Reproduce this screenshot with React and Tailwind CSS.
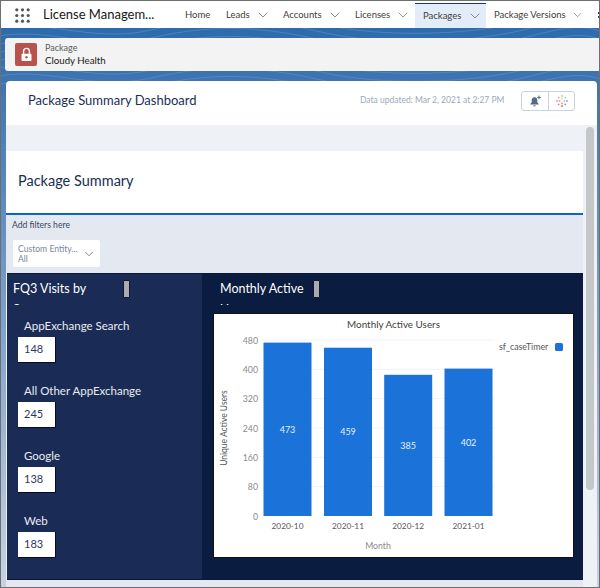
import React from "react";
import { ChevronDown } from "lucide-react";

const navItems = [
  { label: "Home", w: "w-[41px]" },
  { label: "Leads", w: "w-[57px]", menu: true },
  { label: "Accounts", w: "w-[72px]", menu: true },
  { label: "Licenses", w: "w-[60px]", menu: true },
];

const visits = [
  { label: "AppExchange Search", value: 148 },
  { label: "All Other AppExchange", value: 245 },
  { label: "Google", value: 138 },
  { label: "Web", value: 183 },
];

const bars = [
  { x: 263.5, top: 342.6, value: 473, month: "2020-10" },
  { x: 324, top: 347.7, value: 459, month: "2020-11" },
  { x: 384.2, top: 374.8, value: 385, month: "2020-12" },
  { x: 444.5, top: 368.6, value: 402, month: "2021-01" },
];

const ticks = [
  { v: 480, y: 340 },
  { v: 400, y: 369.3 },
  { v: 320, y: 398.7 },
  { v: 240, y: 428 },
  { v: 160, y: 457.3 },
  { v: 80, y: 486.7 },
  { v: 0, y: 516 },
];

function AppDots() {
  return (
    <svg width="15" height="15" viewBox="0 0 15 15" className="text-[#54565a]">
      {[1.8, 7.5, 13.2].map((y) =>
        [1.8, 7.5, 13.2].map((x) => <circle key={`${x}-${y}`} cx={x} cy={y} r="1.6" fill="currentColor" />)
      )}
    </svg>
  );
}

function LockTile() {
  return (
    <div className="flex h-[23px] w-[22px] items-center justify-center rounded-[2px] bg-[#b8524f]">
      <svg width="13" height="15" viewBox="0 0 13 15" fill="none">
        <path d="M3.6 7V4.3a2.9 2.9 0 0 1 5.8 0V7" stroke="#fff" strokeWidth="1.4" />
        <rect x="1.5" y="6.8" width="10" height="7.2" rx="1" fill="#fff" />
        <circle cx="6.5" cy="10.3" r="1.2" fill="#b8524f" />
      </svg>
    </div>
  );
}

function BellIcon() {
  return (
    <svg width="13" height="12" viewBox="0 0 13 12" fill="#54698d">
      <path d="M5.500 2.300c-1.900 0-2.800 1.400-2.800 3v2L1.300 9v.6h8.400V9L8.300 7.300v-2c0-1.700-.9-3-2.800-3z" />
      <path d="M4.300 10.200h2.400a1.200 1.200 0 0 1-2.400 0z" />
      <path d="M10 .6v3.600M8.200 2.400h3.600" stroke="#54698d" strokeWidth="1" />
    </svg>
  );
}

function SparkIcon() {
  const dots = [
    [6, 1, "#e9b27a"],
    [6, 11, "#d9606a"],
    [1, 6, "#e09aa8"],
    [11, 6, "#8fa9d4"],
    [2.6, 2.6, "#e8a08e"],
    [9.4, 2.6, "#9cc7b2"],
    [2.6, 9.4, "#cf82ab"],
    [9.4, 9.4, "#7f9bcf"],
    [6, 3.6, "#ecc394"],
    [6, 8.4, "#dd8f94"],
    [3.6, 6, "#e3a0b2"],
    [8.4, 6, "#a9c0e0"],
  ];
  return (
    <svg width="12" height="12" viewBox="0 0 12 12">
      {dots.map(([x, y, c]) => (
        <circle key={`${x}-${y}`} cx={x} cy={y} r="0.9" fill={c} />
      ))}
    </svg>
  );
}

function TopoBackground() {
  const lines = [];
  for (let i = 0; i < 9; i++) {
    const y = 22 + i * 8;
    lines.push(
      <path
        key={i}
        d={`M-10 ${y} C 40 ${y - 14}, 90 ${y + 14}, 150 ${y} S 260 ${y - 12}, 320 ${y + 2} S 470 ${y + 14}, 530 ${y - 2} S 590 ${y - 8}, 620 ${y}`}
        stroke="#6c97c6"
        strokeWidth="0.5"
        fill="none"
      />
    );
  }
  return (
    <svg width="600" height="100" viewBox="0 0 600 100" className="absolute left-0 top-0">
      {lines}
    </svg>
  );
}

function NavItem({ label, w, menu }) {
  return (
    <div className={`flex shrink-0 items-center whitespace-nowrap ${w}`}>
      <span>{label}</span>
      {menu && <ChevronDown size={16} strokeWidth={1} className="ml-[5px] text-[#54565a]" />}
    </div>
  );
}

function VisitsPanel() {
  return (
    <div className="w-[195px] shrink-0 bg-[#1a2c55]">
      <div className="flex h-[31px] overflow-hidden pl-[6px] pt-[4px] text-white">
        <div className="w-[110px] shrink-0 text-[12.5px] leading-[21px]">FQ3 Visits by Source</div>
        <div className="mt-[2px] h-[18px] w-[7px] rounded-[1px] border border-[#11182c] bg-[#a9abb0]" />
      </div>
      <div className="flex flex-col gap-[20px] pl-[11px] pt-[13px]">
        {visits.map((v) => (
          <div key={v.label}>
            <div className="h-[19px] whitespace-nowrap pl-[6px] text-[11.5px] leading-[16px] text-[#e8ebf2]">{v.label}</div>
            <div className="flex h-[26px] w-[38px] items-center border-b border-r border-[#050d24] bg-white pl-[6px] text-[11px] text-[#2b3a5e]">
              {v.value}
            </div>
          </div>
        ))}
      </div>
    </div>
  );
}

function UsersChart() {
  return (
    <svg width="359" height="243" viewBox="214 314 359 243" className="block bg-white" style={{ fontFamily: "Lato, sans-serif" }}>
      <text x="393.500" y="328" textAnchor="middle" fontSize="9.900" fill="#3e3e3c">Monthly Active Users</text>
      {ticks.map((t) => (
        <g key={t.v}>
          {t.v > 0 && <line x1="263" x2="495" y1={t.y} y2={t.y} stroke="#eef2f8" strokeWidth="1" />}
          <text x="258" y={t.y + 3.500} textAnchor="end" fontSize="8.800" fill="#8b8b8b">{t.v}</text>
        </g>
      ))}
      {bars.map((b) => (
        <g key={b.month}>
          <rect x={b.x} y={b.top} width="48" height={516 - b.top} fill="#1b72d8" />
          <text x={b.x + 24} y={(b.top + 516) / 2 + 3.200} textAnchor="middle" fontSize="9" fill="#e6f0fc">{b.value}</text>
          <text x={b.x + 24} y="529" textAnchor="middle" fontSize="8.300" fill="#54565a">{b.month}</text>
        </g>
      ))}
      <text x="378" y="549" textAnchor="middle" fontSize="8.700" fill="#8b8b8b">Month</text>
      <text transform="translate(227 428) rotate(-90)" textAnchor="middle" fontSize="8.500" fill="#54565a">Unique Active Users</text>
      <text x="499" y="350" fontSize="8.800" fill="#54565a">sf_caseTimer</text>
      <rect x="555" y="343" width="8" height="8" rx="1.500" fill="#1b72d8" />
    </svg>
  );
}

export default function App() {
  return (
    <div
      className="relative h-[588px] w-[600px] overflow-hidden border-x border-b border-[#6d6e70] bg-linear-to-b from-[#2366a9] to-[#c8d2e4] text-[#181818]"
      style={{ fontFamily: "Lato, sans-serif" }}
    >
      <TopoBackground />
      <div className="relative flex h-[28px] items-center border-t border-[#6d6e70] bg-white pt-[1px] text-[9.5px] text-[#3e3e3c]">
        <div className="ml-[14px] shrink-0"><AppDots /></div>
        <div className="ml-[13px] w-[142px] shrink-0 whitespace-nowrap text-[13px] text-[#181818]">License Managem...</div>
        {navItems.map((n) => (
          <NavItem key={n.label} {...n} />
        ))}
        <div className="flex h-[25px] w-[71px] shrink-0 items-center self-end border-t border-[#12378f] bg-[#e3edf9] pl-[8px]">
          <span>Packages</span>
          <ChevronDown size={16} strokeWidth={1} className="ml-[6px] text-[#54565a]" />
        </div>
        <div className="ml-[8px]">
          <NavItem label="Package Versions" w="w-[90px]" menu />
        </div>
        <div className="ml-[14px] flex shrink-0 flex-col gap-[2px]">
          <div className="h-[2px] w-[2px] bg-[#3e3e3c]" />
          <div className="h-[2px] w-[2px] bg-[#3e3e3c]" />
        </div>
      </div>

      <div className="relative ml-[4px] mt-[10px] flex h-[33px] items-center rounded-l-[3px] bg-[#f3f3f3] pl-[10px]">
        <LockTile />
        <div className="ml-[8px]">
          <div className="text-[9px] leading-[12px] text-[#5c5c5c]">Package</div>
          <div className="text-[9.7px] leading-[13px] text-[#181818]">Cloudy Health</div>
        </div>
      </div>

      <div className="relative ml-[5px] mr-[2px] mt-[10px] overflow-hidden rounded-t-[4px] bg-white">
        <div className="flex h-[44px] items-center pb-[5px] pl-[22px]">
          <div className="w-[332px] shrink-0 whitespace-nowrap text-[13px] text-[#1b2f55]">Package Summary Dashboard</div>
          <div className="w-[161px] shrink-0 whitespace-nowrap text-[8.5px] text-[#9aa9bf]">Data updated: Mar 2, 2021 at 2:27 PM</div>
          <div className="flex h-[20px] w-[54px] shrink-0 rounded-[3px] border border-[#c9d3e0]">
            <div className="flex w-[27px] items-center justify-center border-r border-[#c9d3e0]"><BellIcon /></div>
            <div className="flex flex-1 items-center justify-center"><SparkIcon /></div>
          </div>
        </div>

        <div className="flex bg-[#eef2f6]">
          <div className="w-[577px] shrink-0">
            <div className="h-[26px]" />
            <div className="flex h-[64px] items-center border-b-2 border-[#0c64c8] bg-white pb-[2px] pl-[12px] text-[14.5px] text-[#1b2f55]">
              Package Summary
            </div>
            <div className="h-[58px] bg-[#e4e9f1] pl-[6px]">
              <div className="pt-[4px] text-[8.6px] leading-[12px] text-[#39465f]">Add filters here</div>
              <div className="ml-[1px] mt-[9px] flex h-[27px] w-[87px] items-center justify-between rounded-[2px] bg-white pl-[5px] pr-[4px]">
                <div className="whitespace-nowrap">
                  <div className="text-[8.6px] leading-[10px] text-[#7a86a0]">Custom Entity...</div>
                  <div className="text-[8.6px] leading-[10px] text-[#7a86a0]">All</div>
                </div>
                <ChevronDown size={14} strokeWidth={1.2} className="text-[#4a5a7c]" />
              </div>
            </div>
            <div className="ml-[1px] flex h-[307px] border-y border-[#0a1638] bg-[#0a1c40]">
              <VisitsPanel />
              <div className="flex-1">
                <div className="flex h-[31px] overflow-hidden pl-[18px] pt-[4px] text-white">
                  <div className="w-[93px] shrink-0 text-[12.5px] leading-[21px]">Monthly Active Users</div>
                  <div className="mt-[2px] h-[18px] w-[7px] rounded-[1px] border border-[#11182c] bg-[#a9abb0]" />
                </div>
                <div className="ml-[11px] mt-[8px] w-[361px] border border-[#111]">
                  <UsersChart />
                </div>
              </div>
            </div>
            <div className="h-[7px] bg-[#e4e9f1]" />
          </div>
          <div className="flex-1 pl-[3px] pt-[2px]">
            <div className="h-[363px] w-[8px] rounded-full bg-[#c4c6c8]" />
          </div>
        </div>
      </div>
    </div>
  );
}
